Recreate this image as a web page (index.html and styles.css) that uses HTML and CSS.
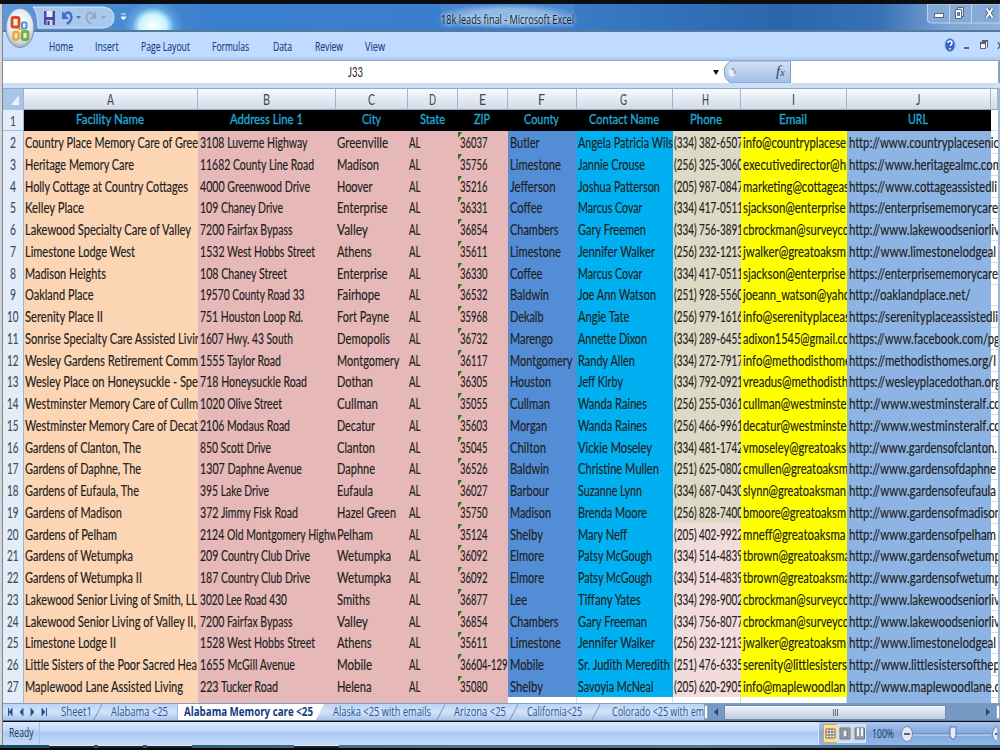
FILE: index.html
```html
<!DOCTYPE html>
<html lang="en">
<head>
<meta charset="utf-8">
<title>18k leads final - Microsoft Excel</title>
<link rel="stylesheet" href="styles.css">
</head>
<body>
<div class="window">
  <header class="titlebar">
    <div class="quick">
      <svg class="qicons" width="116" height="26" viewBox="0 0 116 26">
        <path d="M2 3H72Q83 4 83 13.500T72 24H7Q7 8 2 3Z" fill="#a9c8ec" stroke="#d7e7f8" stroke-width="1"/>
        <path d="M13 7h11v14H14l-1-1z" fill="#4f49a5"/><path d="M15.500 7h6v6h-6z" fill="#e6edfa"/><path d="M15.500 16h6v5h-6z" fill="#d5daf0"/><path d="M16.500 17h2v4h-2z" fill="#3b3680"/>
        <path d="M33 11q5-5 7 0t-4 9" fill="none" stroke="#3f6fc4" stroke-width="2.4"/><path d="M31 7v8h7z" fill="#3f6fc4"/>
        <path d="M45 12h5l-2.500 3z" fill="#56749f"/>
        <path d="M63 11q-5-5-7 0t4 9" fill="none" stroke="#93a9c4" stroke-width="2"/><path d="M65 7v8h-6z" fill="#93a9c4"/>
        <path d="M70 12h5l-2.500 3z" fill="#8e9fb5"/>
        <path d="M90 10h5M90 13h5l-2.500 3z" fill="#eaf3ff" stroke="#eaf3ff" stroke-width="1"/>
      </svg>
    </div>
    <div class="title"><span data-w="133">18k leads final - Microsoft Excel</span></div>
    <svg class="winbtns" width="73" height="20" viewBox="0 0 73 20">
      <path d="M.5 0V16q0 3 4 3H73V0z" fill="#86aad6" stroke="#bdd3ec"/>
      <path d="M22.500 0v19M44.500 0v19" stroke="#c0d5ec"/>
      <rect x="7.500" y="9.500" width="9" height="4" fill="#fff" stroke="#55677e"/>
      <path d="M30.500 3.500h6v9h-6z" fill="#dce7f4" stroke="#55677e"/><path d="M28.500 5.500h6v9h-6z" fill="#fff" stroke="#55677e"/><path d="M30.500 8.500h2v3h-2z" fill="#86aad6" stroke="#55677e"/>
      <path d="M59.500 4.500l6 9M65.500 4.500l-6 9" stroke="#55677e" stroke-width="4"/><path d="M59.500 4.500l6 9M65.500 4.500l-6 9" stroke="#fff" stroke-width="2"/>
    </svg>
  </header>

  <svg class="orb" width="32" height="43" viewBox="0 0 32 43">
    <defs><radialGradient id="orbfill" cx=".5" cy=".4" r=".6"><stop offset="0" stop-color="#fff"/><stop offset=".7" stop-color="#e3e7ee"/><stop offset="1" stop-color="#9eabc0"/></radialGradient></defs>
    <ellipse cx="16" cy="21" rx="14" ry="19.500" fill="url(#orbfill)" stroke="#7f93b3"/>
    <g fill="none" stroke-width="2.800">
      <rect x="8" y="10.500" width="7" height="9.500" rx="1.500" stroke="#dd4a1e"/>
      <rect x="18" y="15.500" width="4.500" height="6" rx="1" stroke="#4c9ad8" stroke-width="2"/>
      <rect x="9.500" y="25" width="5" height="7.500" rx="1" stroke="#f0a52b" stroke-width="2.400"/>
      <rect x="18" y="24.500" width="6" height="8" rx="1.500" stroke="#74b13c"/>
      <path d="M14 22h4" stroke="#f0a52b" stroke-width="2"/>
    </g>
  </svg>

  <nav class="ribbon">
    <span class="rt rt-home"><span data-w="24">Home</span></span>
    <span class="rt rt-insert"><span data-w="23.5">Insert</span></span>
    <span class="rt rt-layout"><span data-w="49">Page Layout</span></span>
    <span class="rt rt-formulas"><span data-w="37">Formulas</span></span>
    <span class="rt rt-data"><span data-w="19">Data</span></span>
    <span class="rt rt-review"><span data-w="28">Review</span></span>
    <span class="rt"><span data-w="20">View</span></span>
    <svg class="mdi" width="58" height="20" viewBox="0 0 58 20">
      <ellipse cx="8" cy="9" rx="5" ry="6.500" fill="#2f63c8" stroke="#8ba9dc"/><path d="M6 7q0-2 2-2t2 2q0 1-2 3M8 12v1.500" stroke="#fff" stroke-width="1.600" fill="none"/>
      <path d="M22 12h5" stroke="#56657c" stroke-width="2"/>
      <path d="M40.500 5.500h5v6M38.500 7.500h5v5h-5z" fill="#f6f9ff" stroke="#56657c"/><path d="M38 7h6M40 5h6" stroke="#56657c" stroke-width="2"/>
      <path d="M56 6l4 7M60 6l-4 7" stroke="#56657c" stroke-width="1.500"/>
    </svg>
  </nav>

  <div class="formula">
    <div class="namebox"><span data-w="15">J33</span><i class="caret"></i></div>
    <div class="fx"><svg width="68" height="22" viewBox="0 0 68 22">
      <defs><linearGradient id="fxfill" x2="0" y2="1"><stop offset="0" stop-color="#d3e2f6"/><stop offset="1" stop-color="#9fbee8"/></linearGradient></defs>
      <path d="M7 0H66.500V22H7Q0 18 0 11T7 0Z" fill="url(#fxfill)" stroke="#7b9ac6"/><ellipse cx="8" cy="11" rx="3.500" ry="4.500" fill="#e9eef6"/><path d="M7 8q4-1 4 5" fill="none" stroke="#9da9ba" stroke-width="2"/>
    </svg><span class="fxlabel">f<small>x</small></span></div>
    <div class="finput"></div>
    <div class="fend"></div>
  </div>

  <main class="sheet">
    <div class="row letters" id="letters"></div>
    <div id="rows"></div>
  </main>

  <div class="tabbar">
    <svg class="tabnav" width="50" height="18" viewBox="0 0 50 18"><path d="M5.500 4v8M9 4.500v7L6 8zM20 4.500v7l-3-3.500zM28 4.500v7l3-3.500zM39 4.500v7l3-3.500zM43.500 4v8" fill="#27539a" stroke="#27539a" stroke-width="1"/></svg>
    <div class="tab t1"><span data-w="31">Sheet1</span></div>
    <div class="tab t2"><span data-w="57">Alabama &lt;25</span></div>
    <div class="tab t3"><span data-w="129">Alabama Memory care &lt;25</span></div>
    <div class="tab t4"><span data-w="98">Alaska &lt;25 with emails</span></div>
    <div class="tab t5"><span data-w="52">Arizona &lt;25</span></div>
    <div class="tab t6"><span data-w="55">California&lt;25</span></div>
    <div class="tab t7"><span data-w="92">Colorado &lt;25 with em</span></div>
    <div class="hscroll"><i class="split"></i><i class="arrow left"></i><div class="thumb"><i></i><i></i><i></i></div><i class="arrow right"></i><i class="split"></i></div>
  </div>

  <footer class="status">
    <div class="ready"><span data-w="24.5">Ready</span></div>
    <div class="zoombar">
      <svg width="43" height="20" viewBox="0 0 43 20">
        <rect x=".5" y=".5" width="14" height="18" fill="#ffdf8e" stroke="#c9a86a"/><rect x="14.500" y=".5" width="28" height="18" fill="#ccdcf1" stroke="#dbe6f5"/>
        <path d="M3 5h9v9H3zM6 5v9M9 5v9M3 8h9M3 11h9" fill="#fff" stroke="#6c6a5f"/>
        <path d="M17 4h10v11H17z" fill="#999fa9" stroke="#6e7682"/><path d="M20 6h4v7h-4z" fill="#eef1f5" stroke="#6e7682"/>
        <path d="M32 4h9.500v11H32z" fill="#999fa9" stroke="#6e7682"/><path d="M34 4h2v8h-2zM38 4h2v8h-2z" fill="#eef1f5"/>
      </svg>
      <span class="pct"><span data-w="22">100%</span></span>
      <svg class="slider" width="100" height="22" viewBox="0 0 100 22">
        <path d="M14 11H94" stroke="#5d7fae"/><path d="M14 12H94" stroke="#d3e2f5"/>
        <ellipse cx="10" cy="11" rx="5.500" ry="7.500" fill="#e4e9f1" stroke="#7288a8"/><path d="M7 11h6" stroke="#51637e" stroke-width="2"/>
        <path d="M53 4h6v9l-3 4-3-4z" fill="#e4edf8" stroke="#5a7397"/>
        <ellipse cx="101" cy="11" rx="5.500" ry="7.500" fill="#e4e9f1" stroke="#7288a8"/><path d="M98 11h4" stroke="#51637e" stroke-width="2"/>
      </svg>
    </div>
  </footer>
  <div class="taskbar"><i></i><i></i><i></i><i class="far"></i></div>
</div>
<script src="sheet.js"></script>
</body>
</html>
```
FILE: styles.css
```css
* { box-sizing: border-box; }
body { margin: 0; width: 1000px; height: 750px; overflow: hidden; background: #0b0f14; }
.window { position: relative; width: 1000px; height: 750px; overflow: hidden; display: flex; flex-direction: column; border-top: 4px solid #0a0d12; font-family: "Lato", sans-serif; }
.window::before { content: ""; position: absolute; z-index: 9; left: 0; top: 0; width: 3px; height: 741px; background: linear-gradient(90deg, #d4d4d4 0 2px, #76869b 2px); }
[data-w] { display: inline-block; white-space: pre; transform-origin: 0 50%; }

.titlebar { height: 28px; flex: none; display: flex; align-items: flex-start; border-bottom: 2px solid #56789f;
  background: radial-gradient(ellipse 30px 26px at 153px 22px, #fff 0, #c8f3ff 45%, rgba(110,185,235,.55) 70%, rgba(80,150,220,0) 100%), linear-gradient(90deg, #5e98d9 0, #3a7fcd 22%, #3b7ecb 55%, #2a66ac 78%, #3871b5 88%, #7ca5d5 95%, #8fb2dd); }
.quick { width: 116px; margin-left: 31px; }
.qicons { display: block; }
.title { margin-left: 294px; width: 137px; height: 24px; font: 13px/30px "Open Sans", sans-serif; color: #0f1926; }
.title > span { background: radial-gradient(ellipse, rgba(190,215,243,.65) 40%, rgba(140,180,225,.15) 75%); text-shadow: 0 0 5px #cfe2f7, 0 0 4px #cfe2f7; height: 24px; }
.winbtns { margin-left: auto; }
.orb { position: absolute; left: 4px; top: 3px; z-index: 5; }

.ribbon { height: 29px; flex: none; padding-left: 49px; display: flex; align-items: center; background: linear-gradient(#c4dcfc, #bfdbff 20%, #bfdbff 85%, #a9c6ea); border-bottom: 1px solid #91acd0; font: 12.5px/28px "Open Sans", sans-serif; color: #1c3f86; -webkit-text-stroke: .15px; }
.rt { width: 50px; flex: none; padding-top: 2px; }
.rt-home { width: 45.5px; } .rt-insert { width: 46.5px; } .rt-layout { width: 71px; } .rt-formulas { width: 60.5px; } .rt-data { width: 42px; }
.mdi { margin-left: auto; }

.formula { height: 27px; flex: none; padding: 0 0 5px 3px; display: flex; background: #cddff5; }
.namebox { width: 721px; flex: none; background: #fff; padding-left: 345px; line-height: 22px; font-size: 14.3px; color: #1b2026; display: flex; align-items: center; justify-content: space-between; }
.caret { border: 3px solid transparent; border-top: 5px solid #111; border-bottom: 0; margin-right: 5px; }
.fx { position: relative; width: 67px; flex: none; height: 22px; background: #fff; }
.fx svg { display: block; }
.fxlabel { position: absolute; left: 52px; top: 0; font: italic 15px/21px "Liberation Serif", serif; color: #354053; }
.fxlabel small { font-size: 10px; }
.finput { flex: 1; background: #fff; }
.fend { width: 2px; background: #87a3c9; }

.sheet { height: 615px; flex: none; overflow: hidden; padding-left: 3px; background: #fff; border-right: 2px solid #9cb7db; }
.row { height: 21.76px; display: grid; grid-template-columns: 21px 174px 138px 72px 50px 50px 69px 95.5px 68.5px 106px 144px 7px; font-size: 14.6px; line-height: 23px; color: #202020; -webkit-text-stroke: .15px; }
.letters { height: 22px; background: linear-gradient(#f8fafc, #e3e9f2 50%, #d2dbe8); border-top: 1px solid #93aac7; border-bottom: 1px solid #93a3b8; line-height: 21px; color: #3b4653; text-align: center; -webkit-text-stroke: 0; }
.letters > div { border-right: 1px solid #9eb4d0; padding-right: 1px; }
.letters > .corner { background: #a9c4e9; padding: 0; }
.corner svg { display: block; }
.row > .num { background: #e3edf8; border-right: 1px solid #9eb6ce; border-bottom: 1px solid #a5bdd6; color: #3c4d5f; text-align: center; padding: 0; overflow: hidden; }
.head { height: 21px; line-height: 18px; color: #22a7d6; -webkit-text-stroke: .35px; }
.head > div { background: #000; text-align: center; padding-right: 2px; }
.head > .num { line-height: 22px; -webkit-text-stroke: .1px; }
.head > .out { background: #fff; }
.head span { font-size: 14px; }
.row .c { padding-left: 1px; overflow: hidden; white-space: nowrap; position: relative; }
.a { background: #fcd5b4; } .b, .ci, .st, .z { background: #e6b8b7; } .co { background: #538dd5; } .g { background: #00b0f0; }
.h { background: #ddd9c4; } .h.pink { background: #f2dcdb; } .em { background: #ff0; } .u { background: #8db4e2; }
.row .b, .row .z, .row .em, .row .u, .row .co { padding-left: 2px; }
.row .h { padding-left: 1.5px; }
.row .u { overflow: visible; }
.out { border-bottom: 1px solid #d5dce6; }
.z::before { content: ""; position: absolute; left: 0; top: 1px; border-top: 6px solid #1d7a1d; border-right: 4px solid transparent; }
.tail { height: 7px; }
.tail > .c { border-right: 1px solid #d5dce6; }
.tail > .a, .tail > .b, .tail > .ci, .tail > .st, .tail > .z, .tail > .u { border-right: 0; }
.tail > .z::before { display: none; }
.tail > .co, .tail > .g, .tail > .h, .tail > .em { background: #fff; }

.tabbar { height: 18px; flex: none; padding-left: 3px; display: flex; background: linear-gradient(#bcd3f2, #d3e3f8 50%, #a9c6ec); border-top: 1px solid #7e9cc5; border-bottom: 1px solid #5c7daa; font: 12.5px/16px "Open Sans", sans-serif; color: #2c5497; }
.tabnav { flex: none; }
.tab { position: relative; flex: none; overflow: hidden; padding-left: 8px; border-left: 1px solid #9db8dc; }
.tab::after { content: ""; position: absolute; right: 4px; top: -2px; width: 1px; height: 22px; background: #7d9ac3; transform: rotate(28deg); }
.t1 { width: 49px; } .t2 { width: 75px; } .t3 { width: 148px; } .t4 { width: 120px; } .t5 { width: 73px; } .t6 { width: 82px; } .t7 { width: 104px; }
.t1, .t2, .t4, .t5, .t6, .t7 { border-left: 0; }
.t2 { padding-left: 8.5px; } .t4 { padding-left: 8px; } .t5 { padding-left: 9px; } .t6 { padding-left: 9px; } .t7 { padding-left: 12px; }
.t3 { padding-left: 6px; background: #fff; color: #123a80; font-weight: 700; clip-path: polygon(0 0, 100% 0, 94% 100%, 0 100%); }
.t2::after, .t7::after { display: none; }
.hscroll { flex: 1; display: flex; align-items: center; justify-content: space-between; background: #7899c4; }
.split { width: 4px; height: 14px; background: #fff; border: 1px solid #8ca4c5; }
.arrow { border: 4.5px solid transparent; }
.left { border-right: 4px solid #27466f; border-left: 0; margin-left: 6px; margin-right: 6px; }
.right { border-left: 4px solid #27466f; border-right: 0; margin-left: 40px; margin-right: 6px; }
.thumb { flex: 1; height: 15px; display: flex; gap: 1px; justify-content: center; align-items: center; background: linear-gradient(#f0f4f9, #d7e0ec 50%, #bccbe0); border: 1px solid #7089ac; }
.thumb i { width: 1px; height: 7px; background: #60748f; }

.status { height: 23px; flex: none; margin-top: 1px; padding-left: 3px; display: flex; justify-content: space-between; background: linear-gradient(#dbe8fa, #c3d9f7 35%, #a9c9f3 50%, #c3dafa 90%); font: 12px/21px "Open Sans", sans-serif; color: #24364f; }
.ready { width: 37px; padding-left: 5.5px; border-right: 1px solid #a5c0e4; }
.zoombar { width: 182px; padding-left: 4px; display: flex; align-items: center; overflow: hidden; background: linear-gradient(#a9c6ee, #7fa7de 50%, #92b7e8); border-left: 1px solid #dce9fa; }
.zoombar svg { flex: none; }
.pct { flex: none; width: 27px; padding-left: 6px; margin-right: 4px; }
.taskbar { height: 6px; flex: none; display: flex; gap: 4px; padding-left: 49px; border-bottom: 3px solid #05080b; background: linear-gradient(90deg, #1d4860, #4c7187 40%, #54798f 70%, #315a78); }
.taskbar i { width: 45px; height: 3px; background: #19242e; border-top: 1px solid #e5eaee; }
.taskbar .far { margin-left: 98px; }
```
FILE: sheet.js
```js
// Each record: cell text and its drawn width in pixels, columns A to J.
const Z = 27.5, P = 69;
const data = [
['Country Place Memory Care of Gree',173,'3108 Luverne Highway',107.5,'Greenville',51,'36037',Z,'Butler',29.5,'Angela Patricia Wils',95,'(334) 382-6507','info@countryplacese',103,'http://www.countryplacesenio',151],
['Heritage Memory Care',109,'11682 County Line Road',114,'Madison',42,'35756',Z,'Limestone',51,'Jannie Crouse',67,'(256) 325-3060','executivedirector@h',103,'https://www.heritagealmc.com',153],
['Holly Cottage at Country Cottages',163,'4000 Greenwood Drive',110,'Hoover',35.5,'35216',Z,'Jefferson',45.5,'Joshua Patterson',82,'(205) 987-0847','marketing@cottageas',106,'https://www.cottageassistedli',148],
['Kelley Place',59,'109 Chaney Drive',83,'Enterprise',50.5,'36331',Z,'Coffee',32.5,'Marcus Covar',64.5,'(334) 417-0511','sjackson@enterprise',102.5,'https://enterprisememorycare',149],
['Lakewood Specialty Care of Valley',166,'7200 Fairfax Bypass',92.5,'Valley',31,'36854',Z,'Chambers',48.5,'Gary Freemen',68,'(334) 756-3891','cbrockman@surveyco',106,'http://www.lakewoodseniorliv',151],
['Limestone Lodge West',110,'1532 West Hobbs Street',115,'Athens',34.5,'35611',Z,'Limestone',51,'Jennifer Walker',77,'(256) 232-1213','jwalker@greatoaksm',103,'http://www.limestonelodgeal',147],
['Madison Heights',81,'108 Chaney Street',87,'Enterprise',50.5,'36330',Z,'Coffee',32.5,'Marcus Covar',64.5,'(334) 417-0511','sjackson@enterprise',102.5,'https://enterprisememorycare',149],
['Oakland Place',68.5,'19570 County Road 33',104.5,'Fairhope',43,'36532',Z,'Baldwin',39,'Joe Ann Watson',78,'(251) 928-5560','joeann_watson@yaho',107,'http://oaklandplace.net/',121.5],
['Serenity Place II',78,'751 Houston Loop Rd.',103,'Fort Payne',52,'35968',Z,'Dekalb',33.5,'Angie Tate',51.5,'(256) 979-1616','info@serenityplaceas',107,'https://serenityplaceassistedli',149],
['Sonrise Specialty Care Assisted Livin',176,'1607 Hwy. 43 South',93,'Demopolis',53,'36732',Z,'Marengo',43,'Annette Dixon',69,'(334) 289-6455','adixon1545@gmail.co',106,'https://www.facebook.com/pg',151],
['Wesley Gardens Retirement Comm',173,'1555 Taylor Road',81,'Montgomery',62.5,'36117',Z,'Montgomery',62.5,'Randy Allen',57,'(334) 272-7917','info@methodisthome',108,'https://methodisthomes.org/l',147],
['Wesley Place on Honeysuckle - Spe',173,'718 Honeysuckle Road',107,'Dothan',36,'36305',Z,'Houston',41,'Jeff Kirby',45,'(334) 792-0921','vreadus@methodisth',105,'https://wesleyplacedothan.org',152],
['Westminster Memory Care of Cullm',173,'1020 Olive Street',82,'Cullman',41,'35055',Z,'Cullman',40,'Wanda Raines',69,'(256) 255-0361','cullman@westminste',103.5,'http://www.westminsteralf.co',152],
['Westminster Memory Care of Decat',173,'2106 Modaus Road',90,'Decatur',38,'35603',Z,'Morgan',37,'Wanda Raines',69,'(256) 466-9961','decatur@westminste',103.5,'http://www.westminsteralf.co',152],
['Gardens of Clanton, The',116,'850 Scott Drive',71,'Clanton',38,'35045',Z,'Chilton',36,'Vickie Moseley',74,'(334) 481-1742','vmoseley@greatoaks',103,'http://www.gardensofclanton.',148],
['Gardens of Daphne, The',116,'1307 Daphne Avenue',102,'Daphne',38,'36526',Z,'Baldwin',39,'Christine Mullen',81,'(251) 625-0802','cmullen@greatoaksm',105,'http://www.gardensofdaphne',147],
['Gardens of Eufaula, The',114,'395 Lake Drive',69,'Eufaula',36,'36027',Z,'Barbour',39,'Suzanne Lynn',64,'(334) 687-0430','slynn@greatoaksman',103,'http://www.gardensofeufaula',147],
['Gardens of Madison',97,'372 Jimmy Fisk Road',98,'Hazel Green',59,'35750',Z,'Madison',41,'Brenda Moore',69,'(256) 828-7400','bmoore@greatoaksm',103,'http://www.gardensofmadison',152],
['Gardens of Pelham',92,'2124 Old Montgomery Highw',138,'Pelham',36,'35124',Z,'Shelby',33,'Mary Neff',49,'(205) 402-9922','mneff@greatoaksma',102.5,'http://www.gardensofpelham',147],
['Gardens of Wetumpka',108,'209 Country Club Drive',110,'Wetumpka',54,'36092',Z,'Elmore',34,'Patsy McGough',74,'(334) 514-4839','tbrown@greatoaksma',107,'http://www.gardensofwetump',152],
['Gardens of Wetumpka II',117,'187 Country Club Drive',110,'Wetumpka',54,'36092',Z,'Elmore',34,'Patsy McGough',74,'(334) 514-4839','tbrown@greatoaksma',107,'http://www.gardensofwetump',152],
['Lakewood Senior Living of Smith, LL',172,'3020 Lee Road 430',87,'Smiths',33,'36877',Z,'Lee',17,'Tiffany Yates',63,'(334) 298-9002','cbrockman@surveyco',106,'http://www.lakewoodseniorliv',151],
['Lakewood Senior Living of Valley II,',171,'7200 Fairfax Bypass',92.5,'Valley',31,'36854',Z,'Chambers',48.5,'Gary Freeman',69,'(334) 756-8077','cbrockman@surveyco',106,'http://www.lakewoodseniorliv',151],
['Limestone Lodge II',91,'1528 West Hobbs Street',115,'Athens',34.5,'35611',Z,'Limestone',51,'Jennifer Walker',77,'(256) 232-1213','jwalker@greatoaksm',103,'http://www.limestonelodgeal',147],
['Little Sisters of the Poor Sacred Hea',172,'1655 McGill Avenue',95,'Mobile',35,'36604-129',47.5,'Mobile',34,'Sr. Judith Meredith',92,'(251) 476-6335','serenity@littlesisters',104,'http://www.littlesistersofthep',151],
['Maplewood Lane Assisted Living',158,'223 Tucker Road',78,'Helena',34.5,'35080',Z,'Shelby',33,'Savoyia McNeal',75.5,'(205) 620-2905','info@maplewoodlan',102.5,'http://www.maplewoodlane.c',151]
];
const heads = [['Facility Name',68],['Address Line 1',73],['City',19],['State',25],['ZIP',16],['County',35],['Contact Name',70],['Phone',32],['Email',28],['URL',20]];
const cls = ['a','b','ci','st','z','co','g','h','em','u'];
const fit = (t, w) => `<span data-w="${w}">${t}</span>`;

document.getElementById('letters').innerHTML =
  '<div class="corner"><svg width="20" height="20"><path d="M16 6v10H8z" fill="#e9f2fd"/></svg></div>' +
  [...'ABCDEFGHIJ'].map(l => `<div>${fit(l, l === 'I' ? 3 : l === 'J' ? 4.5 : 7)}</div>`).join('') + '<div></div>';

let html = `<div class="row head"><div class="num">${fit('1', 6)}</div>${heads.map(h => `<div>${fit(h[0], h[1])}</div>`).join('')}<div class="out"></div></div>`;
data.forEach((d, i) => {
  const n = i + 2;
  const cells = [[d[0],d[1]],[d[2],d[3]],[d[4],d[5]],['AL',11.5],[d[6],d[7]],[d[8],d[9]],[d[10],d[11]],[d[12],P],[d[13],d[14]],[d[15],d[16]]];
  html += `<div class="row"><div class="num">${fit(n, n > 9 ? 11.5 : 6)}</div>` +
    cells.map((c, k) => `<div class="c ${cls[k]}${k === 7 && n > 19 ? ' pink' : ''}">${fit(c[0], c[1])}</div>`).join('') +
    '<div class="out"></div></div>';
});
html += `<div class="row tail"><div class="num"></div>${cls.map(c => `<div class="c ${c}"></div>`).join('')}<div></div></div>`;
document.getElementById('rows').innerHTML = html;

// Condense every label to its drawn width; the box shrinks with it so that centring still holds.
const spans = [...document.querySelectorAll('[data-w]')];
const natural = spans.map(s => s.getBoundingClientRect().width);
spans.forEach((s, i) => {
  const w = +s.dataset.w;
  s.style.width = w + 'px';
  s.innerHTML = `<span style="display:inline-block;transform-origin:0 50%;transform:scaleX(${w / natural[i]})">${s.innerHTML}</span>`;
});
```
